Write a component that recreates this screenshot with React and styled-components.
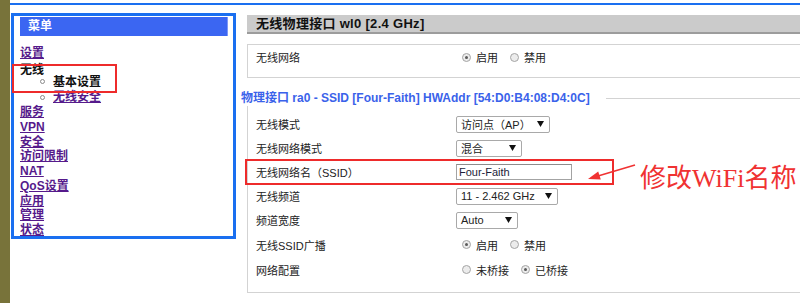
import styled, { createGlobalStyle } from 'styled-components';

const GlobalStyle = createGlobalStyle`
  body {
    margin: 0;
    background: #fff;
  }
`;

const Page = styled.div`
  display: flex;
  width: 800px;
  height: 303px;
  overflow: hidden;
  background: #fff;
  font-family: "Liberation Sans", "Noto Sans CJK SC", sans-serif;
  color: #222;
`;

const OliveStrip = styled.div`
  width: 10px;
  flex-shrink: 0;
  background: #78733a;
`;

const Main = styled.div`
  flex: 1;
  min-width: 0;
  display: flex;
  flex-direction: column;
`;

const TopRule = styled.div`
  height: 2px;
  margin-top: 3px;
  background: #1a6ff0;
`;

const Body = styled.div`
  display: flex;
  align-items: flex-start;
`;

/* ---------- left menu ---------- */

const Menu = styled.nav`
  position: relative;
  box-sizing: border-box;
  flex-shrink: 0;
  width: 225px;
  height: 226px;
  margin: 8px 0 0 1px;
  padding: 1px 5px 0 6px;
  border: 3px solid #1a6ff0;
`;

const MenuTitle = styled.div`
  height: 19px;
  padding-left: 8px;
  background: #3b66f2;
  border-right: 1px solid #7d97f7;
  color: #fff;
  font-size: 12px;
  font-weight: bold;
  line-height: 19px;
`;

const MenuList = styled.div`
  margin-top: 10px;
`;

const MenuItem = styled.div`
  display: flex;
  align-items: center;
  height: 14.75px;
  margin-top: ${(p) => p.$mt || 0}px;
  padding-left: ${(p) => (p.$sub ? 20 : 0)}px;
  font-size: 12px;
  font-weight: bold;
  line-height: 14.75px;
`;

const MenuLink = styled.a`
  color: ${(p) => (p.$current ? '#111' : '#551a8b')};
  text-decoration: ${(p) => (p.$current ? 'none' : 'underline')};
  text-underline-offset: 1px;
`;

const Bullet = styled.span`
  box-sizing: border-box;
  width: 5px;
  height: 5px;
  margin-right: 8px;
  border: 1px solid #8a8a8a;
  border-radius: 50%;
`;

const MenuMark = styled.div`
  position: absolute;
  left: -2px;
  top: 48px;
  box-sizing: border-box;
  width: 105px;
  height: 29px;
  border: 2px solid #ee2b2b;
`;

/* ---------- right content ---------- */

const Content = styled.div`
  flex: none;
  width: 560px;
  margin: 10px 0 0 11px;
`;

const SectionHeader = styled.div`
  height: 17px;
  padding-left: 9px;
  background: #cbcbcb;
  border-bottom: 2px solid #9c9c9c;
  color: #111;
  font-size: 13px;
  font-weight: bold;
  line-height: 17px;
  letter-spacing: 0.3px;
`;

const Panel = styled.div`
  box-sizing: border-box;
  margin-top: ${(p) => p.$mt}px;
  border: 1px solid #d3d3d3;
  padding-bottom: ${(p) => p.$pb || 0}px;
`;

const Legend = styled.div`
  width: fit-content;
  margin: -8px 0 0 -7px;
  padding-right: 16px;
  background: #fff;
  color: #3a62ea;
  font-size: 12px;
  font-weight: bold;
  line-height: 15px;
`;

const Rows = styled.div`
  margin-top: 6px;
`;

const Row = styled.div`
  display: flex;
  align-items: center;
  height: ${(p) => p.$h || 24}px;
  padding-left: 8px;
  font-size: 11px;
`;

const Label = styled.div`
  width: 200px;
  flex-shrink: 0;
`;

const Highlight = styled.div`
  box-sizing: border-box;
  display: flex;
  align-items: center;
  width: 369px;
  height: 26px;
  margin: -1px 0 -1px -11px;
  padding-left: 9px;
  border: 2px solid #ee2b2b;
`;

const SelectBox = styled.div`
  box-sizing: border-box;
  display: flex;
  align-items: center;
  justify-content: space-between;
  width: ${(p) => p.$w}px;
  height: 17px;
  padding: 0 5px 0 4px;
  border: 1px solid #a9a9a9;
  border-radius: 2px;
  background: #fff;
  font-size: 11px;
  white-space: nowrap;
`;

const TextInput = styled.div`
  box-sizing: border-box;
  width: 116px;
  height: 16px;
  padding-left: 2px;
  border: 1px solid #a3a3a3;
  border-top-color: #8c8c8c;
  font-size: 11px;
  line-height: 14px;
  color: #1d1d3a;
`;

const RadioGroup = styled.div`
  display: flex;
  align-items: center;
  margin-left: 6px;
`;

const RadioOption = styled.div`
  display: flex;
  align-items: center;
  gap: 5px;
  margin-right: 12px;
`;

const RadioDot = styled.span`
  position: relative;
  box-sizing: border-box;
  width: 9px;
  height: 9px;
  border: 1px solid #a5a5a5;
  border-radius: 50%;
  background: #ececec;

  &::after {
    content: '';
    display: ${(p) => (p.$on ? 'block' : 'none')};
    position: absolute;
    left: 2px;
    top: 2px;
    width: 3px;
    height: 3px;
    border-radius: 50%;
    background: #5a5a5a;
  }
`;

const Arrow = styled.svg`
  flex-shrink: 0;
  margin-left: -28px;
`;

const Note = styled.div`
  margin: 14px 0 0 2px;
  color: #f03232;
  font-family: "Liberation Serif", "Noto Sans CJK SC", serif;
  font-size: 26px;
  line-height: 26px;
  white-space: nowrap;
`;

function Caret() {
  return (
    <svg width="7" height="6" viewBox="0 0 7 6">
      <polygon points="0,0 7,0 3.5,6" fill="#111" />
    </svg>
  );
}

function Select({ width, children }) {
  return (
    <SelectBox $w={width}>
      <span>{children}</span>
      <Caret />
    </SelectBox>
  );
}

function Radios({ options }) {
  return (
    <RadioGroup>
      {options.map(([text, on]) => (
        <RadioOption key={text}>
          <RadioDot $on={on} />
          <span>{text}</span>
        </RadioOption>
      ))}
    </RadioGroup>
  );
}

const menu = [
  { text: '设置' },
  { text: '无线', current: true, mt: 2 },
  { text: '基本设置', current: true, sub: true, mt: -3 },
  { text: '无线安全', sub: true, mt: 1 },
  { text: '服务' },
  { text: 'VPN' },
  { text: '安全' },
  { text: '访问限制' },
  { text: 'NAT' },
  { text: 'QoS设置' },
  { text: '应用' },
  { text: '管理' },
  { text: '状态' },
];

export default function App() {
  return (
    <>
      <GlobalStyle />
      <Page>
        <OliveStrip />
        <Main>
          <TopRule />
          <Body>
            <Menu>
              <MenuTitle>菜单</MenuTitle>
              <MenuList>
                {menu.map((item) => (
                  <MenuItem key={item.text} $sub={item.sub} $mt={item.mt}>
                    {item.sub && <Bullet />}
                    <MenuLink href="#" $current={item.current}>
                      {item.text}
                    </MenuLink>
                  </MenuItem>
                ))}
              </MenuList>
              <MenuMark />
            </Menu>

            <Content>
              <SectionHeader>无线物理接口 wl0 [2.4 GHz]</SectionHeader>

              <Panel $mt={10}>
                <Row>
                  <Label>无线网络</Label>
                  <Radios options={[['启用', true], ['禁用', false]]} />
                </Row>
                <div style={{ height: 8 }} />
              </Panel>

              <Panel $mt={20} $pb={10}>
                <Legend>物理接口 ra0 - SSID [Four-Faith] HWAddr [54:D0:B4:08:D4:0C]</Legend>
                <Rows>
                  <Row>
                    <Label>无线模式</Label>
                    <Select width={94}>访问点（AP）</Select>
                  </Row>
                  <Row>
                    <Label>无线网络模式</Label>
                    <Select width={66}>混合</Select>
                  </Row>
                  <Row>
                    <Highlight>
                      <Label>无线网络名（SSID）</Label>
                      <TextInput>Four-Faith</TextInput>
                    </Highlight>
                    <Arrow width="52" height="20" viewBox="0 0 52 20">
                      <line x1="49" y1="3" x2="12" y2="14" stroke="#f03232" strokeWidth="1.6" />
                      <polygon points="2,17 14.8,17.6 12.2,9.6" fill="#f03232" />
                    </Arrow>
                    <Note>修改WiFi名称</Note>
                  </Row>
                  <Row>
                    <Label>无线频道</Label>
                    <Select width={102}>11 - 2.462 GHz</Select>
                  </Row>
                  <Row>
                    <Label>频道宽度</Label>
                    <Select width={62}>Auto</Select>
                  </Row>
                  <Row $h={25}>
                    <Label>无线SSID广播</Label>
                    <Radios options={[['启用', true], ['禁用', false]]} />
                  </Row>
                  <Row $h={25}>
                    <Label>网络配置</Label>
                    <Radios options={[['未桥接', false], ['已桥接', true]]} />
                  </Row>
                </Rows>
              </Panel>
            </Content>
          </Body>
        </Main>
      </Page>
    </>
  );
}
